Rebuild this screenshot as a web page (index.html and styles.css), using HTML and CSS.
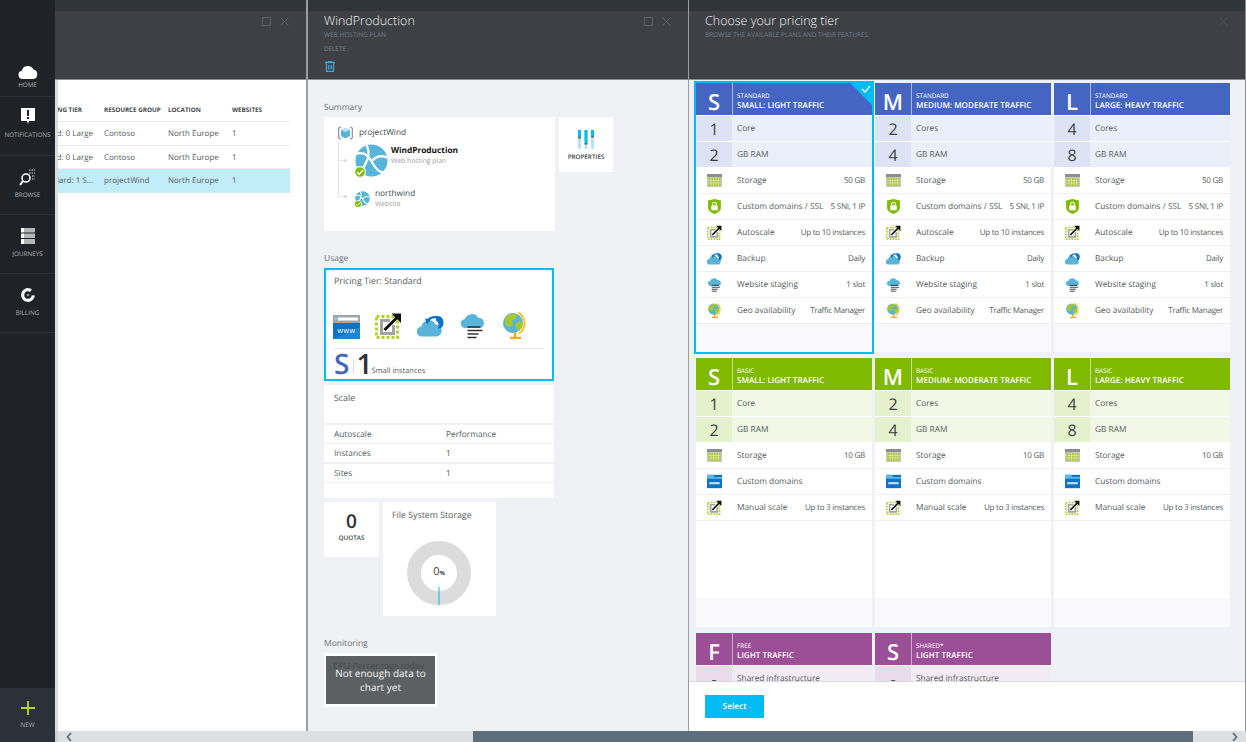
FILE: index.html
```html
<!DOCTYPE html>
<html lang="en">
<head>
<meta charset="utf-8">
<title>Choose your pricing tier</title>
<link rel="stylesheet" href="styles.css">
</head>
<body>
<svg class="defs" aria-hidden="true">
  <symbol id="i-cloud" viewBox="0 0 20 14"><path fill="currentColor" d="M4.5 14a4.2 4.2 0 0 1-.7-8.3A6.2 6.2 0 0 1 15.4 4.6 4.8 4.8 0 0 1 15.5 14z"/></symbol>
  <symbol id="i-www" viewBox="0 0 27 24"><rect width="27" height="24" fill="#0f72c4"/><rect width="27" height="8" fill="#9aa5ae"/><rect x="5" y="2.5" width="20" height="3" fill="#fff"/><circle cx="3" cy="4" r="1.4" fill="#7fd0f2"/><path d="M0 24 27 12v12z" fill="#1b86d6"/><text x="13.5" y="18" class="www-text">www</text></symbol>
  <symbol id="i-domain" viewBox="0 0 27 24"><rect width="27" height="24" fill="#0f72c4"/><path d="M0 0h11l2 4h14v3H0z" fill="#5ab8e6"/><rect x="4" y="13" width="19" height="4" fill="#bfe0f5"/></symbol>
  <symbol id="i-auto" viewBox="0 0 27 27"><rect x="1.5" y="4.5" width="21" height="21" fill="none" stroke="#b4cf2c" stroke-width="3" stroke-dasharray="3 2"/><path d="M15 8.500H6.500V21.500H18.500V13" fill="none" stroke="#a3a3a3" stroke-width="3"/><path d="M9.500 18 24 3.500" stroke="#111" stroke-width="3"/><path d="M16.500 1.500H26V11z" fill="#111"/></symbol>
  <symbol id="i-backup" viewBox="0 0 27 22"><path fill="#59b4d9" d="M5 22a5 5 0 0 1-.6-10A7.500 7.500 0 0 1 18.500 10a6 6 0 0 1 .5 12z"/><path fill="none" stroke="#fff" stroke-width="4.500" d="M10 6C14 1 21 1 24 5"/><path fill="#0f72c4" d="M19 2c4-2 8 2 7.500 7C26 13 24 14 21 14c1-3 1-6-2-8z"/><path fill="none" stroke="#0f72c4" stroke-width="2.400" d="M10 6.500C13 3 17 2 21 3"/><path fill="#0f72c4" d="M8 4l6 1-4 5z"/></symbol>
  <symbol id="i-staging" viewBox="0 0 24 27"><path fill="#59b4d9" d="M5 16a4.500 4.500 0 0 1-.6-9A7.500 7.500 0 0 1 18 6a5 5 0 0 1 1 10z"/><path stroke="#333" stroke-width="1.600" d="M7 15h13M7 18.500h15M7 22h11M7 25.500h9"/></symbol>
  <symbol id="i-geo" viewBox="0 0 25 27"><path d="M16 .5C24 5 25 16 17 21.500" fill="none" stroke="#fcc419" stroke-width="2"/><path d="M8 26h11M13 20v6" stroke="#f7a81b" stroke-width="2.500"/><circle cx="11" cy="11" r="10" fill="#59b4d9"/><path fill="#a5c832" d="M3 6c3-4 8-5 12-4l-1 5-4 1 1 5-4 2-4-3zM13 12l5-3 3 3-2 5-4 1z"/></symbol>
  <symbol id="i-storage" viewBox="0 0 15 13"><rect width="15" height="13" fill="#c6c8ca"/><rect width="15" height="3" fill="#8c8f92"/><rect x="1.500" y="4" width="12" height="8" fill="#a9c52f"/><path d="M1.500 6.500h12M1.500 9h12M4 4v8M6.500 4v8M9 4v8M11.500 4v8" stroke="#e6eacb" stroke-width=".7"/></symbol>
  <symbol id="i-shield" viewBox="0 0 12 14"><path fill="#7fba00" d="M0 1.500 6 0l6 1.500V8c0 3-3 5-6 6-3-1-6-3-6-6z"/><rect x="3" y="6" width="6" height="4.500" fill="#fff"/><path d="M4.300 6V4.700a1.700 1.700 0 0 1 3.400 0V6" fill="none" stroke="#fff"/></symbol>
  <symbol id="i-web" viewBox="0 0 34 34"><circle cx="17" cy="17" r="16.500" fill="#59b4d9"/><path d="M1 10c8-2 12 1 16 8s9 12 13 11M12 1c3 7 3 12-1 19S7 29 9 33M33 14c-7-3-12-1-16 4" fill="none" stroke="#fff" stroke-width="2.400"/></symbol>
  <symbol id="i-check" viewBox="0 0 12 12"><circle cx="6" cy="6" r="5.400" fill="#7fba00" stroke="#fff" stroke-width="1.200"/><path d="M3 6.200 5.200 8.300 9 4" fill="none" stroke="#fff" stroke-width="1.500"/></symbol>
</svg>

<div class="app">
  <nav class="nav">
    <a class="nav-item nav-item--first">
      <svg class="nav-icon nav-icon--cloud"><use href="#i-cloud"/></svg>
      <span>HOME</span>
    </a>
    <a class="nav-item nav-item--tight">
      <svg class="nav-icon" viewBox="0 0 20 20"><path fill="#fff" d="M3 2h14v13h-6l-1 3-1-3H3z"/><path stroke="#1f2327" stroke-width="2" d="M10 4v6M10 11v2"/></svg>
      <span>NOTIFICATIONS</span>
    </a>
    <a class="nav-item">
      <svg class="nav-icon" viewBox="0 0 20 20"><circle cx="8" cy="11" r="4" fill="none" stroke="#fff" stroke-width="1.600"/><path stroke="#fff" stroke-width="2" d="M5 14 2 18"/><path stroke="#9ca1a6" stroke-width="1.500" stroke-dasharray="1.500 1" d="M11 3h6M11 6h6M14 9h3M14 12h3"/></svg>
      <span>BROWSE</span>
    </a>
    <a class="nav-item">
      <svg class="nav-icon" viewBox="0 0 20 20"><path fill="#b4b7ba" d="M3 2h14v16H3z"/><path fill="#fff" d="M3 2h3v16H3z"/><path stroke="#1f2327" d="M3 7h14M3 12.500h14"/></svg>
      <span>JOURNEYS</span>
    </a>
    <a class="nav-item">
      <svg class="nav-icon" viewBox="0 0 20 20"><circle cx="10" cy="10" r="5.300" fill="none" stroke="#fff" stroke-width="3.200" stroke-dasharray="27 6.300" transform="rotate(5 10 10)"/><circle cx="10" cy="10" r="1.300" fill="#8d9297"/></svg>
      <span>BILLING</span>
    </a>
    <a class="nav-new">
      <svg class="new-icon" viewBox="0 0 14 14"><path stroke="#b8d432" stroke-width="1.800" d="M7 0v14M0 7h14"/></svg>
      <span>NEW</span>
    </a>
  </nav>

  <div class="workspace">
    <div class="blades">
      <section class="blade blade--list">
        <header class="blade-head">
          <div class="head-text"></div>
          <div class="win-controls">
            <svg class="win-icon" viewBox="0 0 9 9"><rect x=".5" y=".5" width="8" height="8" fill="none" stroke="currentColor"/></svg>
            <svg class="win-icon" viewBox="0 0 9 9"><path d="M.5.500l8 8M8.500.500l-8 8" stroke="currentColor"/></svg>
          </div>
        </header>
        <div class="list-body">
          <div class="table">
            <div class="t-row t-row--head"><div class="t-tier"><span>PRICING TIER</span></div><div>RESOURCE GROUP</div><div>LOCATION</div><div>WEBSITES</div></div>
            <div class="t-row"><div class="t-tier"><span>Shared: 0 Large</span></div><div>Contoso</div><div>North Europe</div><div>1</div></div>
            <div class="t-row"><div class="t-tier"><span>Shared: 0 Large</span></div><div>Contoso</div><div>North Europe</div><div>1</div></div>
            <div class="t-row t-row--selected"><div class="t-tier"><span>Standard: 1 S...</span></div><div>projectWind</div><div>North Europe</div><div>1</div></div>
          </div>
        </div>
      </section>

      <section class="blade blade--plan">
        <header class="blade-head">
          <div class="head-text">
            <h1>WindProduction</h1>
            <p class="head-sub">WEB HOSTING PLAN</p>
            <p class="head-cmd">DELETE</p>
            <svg class="trash" viewBox="0 0 10 11"><path fill="none" stroke="#46a3d3" stroke-width="1.300" d="M1.500 2.500V10.400H8.500V2.500M0 1.500H10M3.500 1.500V.5H6.500V1.500M3.800 4V8.500M6.200 4V8.500"/></svg>
          </div>
          <div class="win-controls">
            <svg class="win-icon" viewBox="0 0 9 9"><rect x=".5" y=".5" width="8" height="8" fill="none" stroke="currentColor"/></svg>
            <svg class="win-icon" viewBox="0 0 9 9"><path d="M.5.500l8 8M8.500.500l-8 8" stroke="currentColor"/></svg>
          </div>
        </header>
        <div class="plan-body">
          <h2 class="section-label">Summary</h2>
          <div class="tile-row tile-row--summary">
            <div class="summary">
              <div class="res-group">
                <svg class="cube" viewBox="0 0 15 14"><path fill="none" stroke="#8a8f94" stroke-width="1.200" d="M3 .7 .7 2v10L3 13.300M12 .7 14.300 2v10L12 13.300"/><path fill="#59b4d9" d="M7.500 2 12 4v6l-4.500 2.500L3 10V4z"/><path fill="#bfe3f2" d="M7.500 2 12 4 7.500 6 3 4z"/></svg>
                <span>projectWind</span>
              </div>
              <div class="tree">
                <div class="node node--large">
                  <i class="branch"></i>
                  <div class="res-icon res-icon--large">
                    <svg class="fill"><use href="#i-web"/></svg>
                    <svg class="badge badge--large"><use href="#i-check"/></svg>
                  </div>
                  <div class="node-text node-text--large"><b>WindProduction</b><small>Web hosting plan</small></div>
                </div>
                <div class="node node--small">
                  <i class="branch"></i>
                  <div class="res-icon res-icon--small">
                    <svg class="fill"><use href="#i-web"/></svg>
                    <svg class="badge badge--small"><use href="#i-check"/></svg>
                  </div>
                  <div class="node-text"><span>northwind</span><small>Website</small></div>
                </div>
              </div>
            </div>
            <div class="tile tile--props">
              <svg class="props-icon" viewBox="0 0 16 19"><path fill="#b5e4f7" d="M0 0h3v19H0zM6.500 0h3v19h-3zM13 0h3v19h-3z"/><path fill="#00bcf2" d="M0 0h3v8H0zM6.500 0h3v13h-3zM13 0h3v7h-3z"/><path fill="#666" d="M0 7h3v1.500H0zM6.500 13h3v1.500h-3zM13 6h3v1.500h-3z"/></svg>
              <span class="tile-cap">PROPERTIES</span>
            </div>
          </div>

          <h2 class="section-label section-label--gap">Usage</h2>
          <div class="pricing">
            <h3>Pricing Tier: Standard</h3>
            <div class="pricing-icons">
              <svg class="p-icon p-icon--www"><use href="#i-www"/></svg>
              <svg class="p-icon"><use href="#i-auto"/></svg>
              <svg class="p-icon"><use href="#i-backup"/></svg>
              <svg class="p-icon"><use href="#i-staging"/></svg>
              <svg class="p-icon"><use href="#i-geo"/></svg>
            </div>
            <div class="pricing-foot">
              <span class="p-tier">S</span><i class="p-sep"></i><span class="p-count">1</span><span class="p-desc">Small instances</span>
            </div>
          </div>
          <div class="scale-head"><h3>Scale</h3></div>
          <div class="scale-row"><span>Autoscale</span><span>Performance</span></div>
          <div class="scale-row"><span>Instances</span><span>1</span></div>
          <div class="scale-row scale-row--gap"><span>Sites</span><span>1</span></div>
          <div class="scale-row scale-row--end"></div>

          <div class="tile-row tile-row--stats">
            <div class="tile tile--quota"><span class="quota-num">0</span><span class="tile-cap">QUOTAS</span></div>
            <div class="storage">
              <h3>File System Storage</h3>
              <div class="donut-wrap">
                <svg class="donut" viewBox="0 0 64 64"><circle cx="32" cy="32" r="25" fill="none" stroke="#dcdcdc" stroke-width="14"/><path d="M32 46v18" stroke="#00bcf2"/></svg>
                <span class="donut-label">0<small>%</small></span>
              </div>
            </div>
          </div>

          <h2 class="section-label section-label--gap">Monitoring</h2>
          <div class="chart-tile">
            <div class="chart">
              <span class="chart-title">CPU Percentage today</span>
              <div class="chart-msg">Not enough data to chart yet</div>
            </div>
          </div>
        </div>
      </section>

      <section class="blade blade--tiers">
        <header class="blade-head">
          <div class="head-text">
            <h1>Choose your pricing tier</h1>
            <p class="head-sub">BROWSE THE AVAILABLE PLANS AND THEIR FEATURES</p>
          </div>
          <div class="win-controls">
            <svg class="win-icon win-icon--dim" viewBox="0 0 9 9"><path d="M.5.500l8 8M8.500.500l-8 8" stroke="currentColor"/></svg>
          </div>
        </header>
        <div class="tiers-body">
          <div class="tier-grid">
            <article class="card card--std card--selected">
              <div class="card-head"><span class="card-letter">S</span><div class="card-title"><small>STANDARD</small><b>SMALL: LIGHT TRAFFIC</b></div><svg class="card-check" viewBox="0 0 22 22"><path d="M0 0h22v22z" fill="#00bcf2"/><path d="M12 6 15 9 20 3" fill="none" stroke="#fff" stroke-width="1.200"/></svg></div>
              <div class="row row--spec"><span class="spec-num">1</span><span>Core</span></div>
              <div class="row row--spec"><span class="spec-num">2</span><span>GB RAM</span></div>
              <div class="row"><svg class="ico"><use href="#i-storage"/></svg><span>Storage</span><em>50 GB</em></div>
              <div class="row"><svg class="ico"><use href="#i-shield"/></svg><span>Custom domains / SSL</span><em>5 SNI, 1 IP</em></div>
              <div class="row"><svg class="ico"><use href="#i-auto"/></svg><span>Autoscale</span><em>Up to 10 instances</em></div>
              <div class="row"><svg class="ico"><use href="#i-backup"/></svg><span>Backup</span><em>Daily</em></div>
              <div class="row"><svg class="ico"><use href="#i-staging"/></svg><span>Website staging</span><em>1 slot</em></div>
              <div class="row"><svg class="ico"><use href="#i-geo"/></svg><span>Geo availability</span><em>Traffic Manager</em></div>
              <div class="card-space"></div><div class="card-foot"></div>
            </article>
            <article class="card card--std">
              <div class="card-head"><span class="card-letter">M</span><div class="card-title"><small>STANDARD</small><b>MEDIUM: MODERATE TRAFFIC</b></div></div>
              <div class="row row--spec"><span class="spec-num">2</span><span>Cores</span></div>
              <div class="row row--spec"><span class="spec-num">4</span><span>GB RAM</span></div>
              <div class="row"><svg class="ico"><use href="#i-storage"/></svg><span>Storage</span><em>50 GB</em></div>
              <div class="row"><svg class="ico"><use href="#i-shield"/></svg><span>Custom domains / SSL</span><em>5 SNI, 1 IP</em></div>
              <div class="row"><svg class="ico"><use href="#i-auto"/></svg><span>Autoscale</span><em>Up to 10 instances</em></div>
              <div class="row"><svg class="ico"><use href="#i-backup"/></svg><span>Backup</span><em>Daily</em></div>
              <div class="row"><svg class="ico"><use href="#i-staging"/></svg><span>Website staging</span><em>1 slot</em></div>
              <div class="row"><svg class="ico"><use href="#i-geo"/></svg><span>Geo availability</span><em>Traffic Manager</em></div>
              <div class="card-space"></div><div class="card-foot"></div>
            </article>
            <article class="card card--std">
              <div class="card-head"><span class="card-letter">L</span><div class="card-title"><small>STANDARD</small><b>LARGE: HEAVY TRAFFIC</b></div></div>
              <div class="row row--spec"><span class="spec-num">4</span><span>Cores</span></div>
              <div class="row row--spec"><span class="spec-num">8</span><span>GB RAM</span></div>
              <div class="row"><svg class="ico"><use href="#i-storage"/></svg><span>Storage</span><em>50 GB</em></div>
              <div class="row"><svg class="ico"><use href="#i-shield"/></svg><span>Custom domains / SSL</span><em>5 SNI, 1 IP</em></div>
              <div class="row"><svg class="ico"><use href="#i-auto"/></svg><span>Autoscale</span><em>Up to 10 instances</em></div>
              <div class="row"><svg class="ico"><use href="#i-backup"/></svg><span>Backup</span><em>Daily</em></div>
              <div class="row"><svg class="ico"><use href="#i-staging"/></svg><span>Website staging</span><em>1 slot</em></div>
              <div class="row"><svg class="ico"><use href="#i-geo"/></svg><span>Geo availability</span><em>Traffic Manager</em></div>
              <div class="card-space"></div><div class="card-foot"></div>
            </article>

            <article class="card card--basic">
              <div class="card-head"><span class="card-letter">S</span><div class="card-title"><small>BASIC</small><b>SMALL: LIGHT TRAFFIC</b></div></div>
              <div class="row row--spec"><span class="spec-num">1</span><span>Core</span></div>
              <div class="row row--spec"><span class="spec-num">2</span><span>GB RAM</span></div>
              <div class="row"><svg class="ico"><use href="#i-storage"/></svg><span>Storage</span><em>10 GB</em></div>
              <div class="row"><svg class="ico"><use href="#i-domain"/></svg><span>Custom domains</span></div>
              <div class="row"><svg class="ico"><use href="#i-auto"/></svg><span>Manual scale</span><em>Up to 3 instances</em></div>
              <div class="card-space"></div><div class="card-foot"></div>
            </article>
            <article class="card card--basic">
              <div class="card-head"><span class="card-letter">M</span><div class="card-title"><small>BASIC</small><b>MEDIUM: MODERATE TRAFFIC</b></div></div>
              <div class="row row--spec"><span class="spec-num">2</span><span>Cores</span></div>
              <div class="row row--spec"><span class="spec-num">4</span><span>GB RAM</span></div>
              <div class="row"><svg class="ico"><use href="#i-storage"/></svg><span>Storage</span><em>10 GB</em></div>
              <div class="row"><svg class="ico"><use href="#i-domain"/></svg><span>Custom domains</span></div>
              <div class="row"><svg class="ico"><use href="#i-auto"/></svg><span>Manual scale</span><em>Up to 3 instances</em></div>
              <div class="card-space"></div><div class="card-foot"></div>
            </article>
            <article class="card card--basic">
              <div class="card-head"><span class="card-letter">L</span><div class="card-title"><small>BASIC</small><b>LARGE: HEAVY TRAFFIC</b></div></div>
              <div class="row row--spec"><span class="spec-num">4</span><span>Cores</span></div>
              <div class="row row--spec"><span class="spec-num">8</span><span>GB RAM</span></div>
              <div class="row"><svg class="ico"><use href="#i-storage"/></svg><span>Storage</span><em>10 GB</em></div>
              <div class="row"><svg class="ico"><use href="#i-domain"/></svg><span>Custom domains</span></div>
              <div class="row"><svg class="ico"><use href="#i-auto"/></svg><span>Manual scale</span><em>Up to 3 instances</em></div>
              <div class="card-space"></div><div class="card-foot"></div>
            </article>

            <article class="card card--free">
              <div class="card-head"><span class="card-letter">F</span><div class="card-title"><small>FREE</small><b>LIGHT TRAFFIC</b></div></div>
              <div class="row row--spec"><span class="spec-num">-</span><span>Shared infrastructure</span></div>
            </article>
            <article class="card card--free">
              <div class="card-head"><span class="card-letter">S</span><div class="card-title"><small>SHARED*</small><b>LIGHT TRAFFIC</b></div></div>
              <div class="row row--spec"><span class="spec-num">-</span><span>Shared infrastructure</span></div>
            </article>
          </div>
        </div>
        <footer class="tiers-foot"><button class="select-btn">Select</button></footer>
      </section>
    </div>
    <div class="scrollbar">
      <div class="sb-track"><svg class="sb-arrow" viewBox="0 0 6 10"><path d="M5 1 1.500 5 5 9" fill="none" stroke="#5f6e7c" stroke-width="1.800"/></svg></div>
      <div class="sb-thumb"></div>
      <div class="sb-track sb-track--end"><svg class="sb-arrow" viewBox="0 0 6 10"><path d="M1 1 4.500 5 1 9" fill="none" stroke="#5f6e7c" stroke-width="1.800"/></svg></div>
    </div>
  </div>
</div>
</body>
</html>
```

FILE: styles.css
```css
* { box-sizing: border-box; }
html, body { margin: 0; height: 100%; overflow: hidden; }
body { font-family: "Open Sans", "Noto Sans", "Liberation Sans", sans-serif; color: #555b60; background: #fff; text-rendering: geometricPrecision; }
h1, h2, h3, p { margin: 0; font-weight: 400; }
.defs { width: 0; height: 0; display: block; overflow: hidden; }
.www-text { font: 7.500px "Liberation Sans", sans-serif; fill: #fff; text-anchor: middle; letter-spacing: .6px; }

.app { display: flex; width: 1246px; height: 742px; }

/* left navigation */
.nav { width: 55px; flex: none; background: #1f2327; display: flex; flex-direction: column; padding-top: 60px; color: #a9adb1; }
.nav-item { height: 59px; padding-top: 11px; display: flex; flex-direction: column; align-items: center; gap: 3px; border-bottom: 1px solid #2a2f34; font-size: 6.300px; line-height: 10px; white-space: nowrap; }
.nav-item--first { height: 37px; padding-top: 5px; gap: 1px; }
.nav-item--tight { height: 59px; padding-top: 9px; gap: 4px; }
.nav-icon { width: 20px; height: 20px; flex: none; color: #fff; }
.nav-icon--cloud { height: 14px; }
.nav-new { margin-top: auto; height: 54px; background: #2c3038; display: flex; flex-direction: column; align-items: center; padding-top: 13px; gap: 5px; font-size: 6.300px; line-height: 10px; color: #a9adb1; }
.new-icon { width: 14px; height: 14px; }

.workspace { flex: 1; min-width: 0; display: flex; flex-direction: column; }
.blades { flex: 1; min-height: 0; display: flex; }
.blade { display: flex; flex-direction: column; min-height: 0; }
.blade--list { width: 253px; border-right: 2px solid #9a9ea2; background: #fff; }
.blade--plan { width: 381px; border-right: 1px solid #9a9ea2; background: #f0f1f4; }
.blade--tiers { flex: 1; min-width: 0; border-right: 1px solid #8b8f93; background: #f0f1f7; }

/* blade header */
.blade-head { height: 80px; flex: none; background: linear-gradient(#2e353b 11px, #3e4045 11px); border-bottom: 1px solid #8c8f92; padding: 11px 17px 0 16px; display: flex; justify-content: space-between; color: #fff; }
.head-text h1 { font-size: 12.500px; line-height: 20px; font-weight: 300; color: #f0f0f0; }
.head-sub { font-size: 6.500px; line-height: 8px; color: #6f7b88; white-space: nowrap; }
.head-cmd { font-size: 6.300px; line-height: 8px; margin-top: 6px; color: #7d8084; }
.trash { display: block; width: 10px; height: 11px; margin: 8px 0 0 1px; }
.win-controls { display: flex; gap: 9px; margin-top: 6px; color: #5c5f63; }
.win-icon { width: 9px; height: 9px; }
.win-icon--dim { color: #4d5054; }

/* first blade */
.list-body { flex: 1; border-left: 3px solid #dcdcdc; padding-top: 18px; min-height: 0; }
.table { width: 232px; font-size: 8px; }
.t-row { display: grid; grid-template-columns: 46px 64px 64px 58px; height: 23.500px; padding-top: 1px; align-items: center; border-bottom: 1px solid #ececec; white-space: nowrap; }
.t-row--head { height: 24px; padding-top: 0; font-size: 6.300px; font-weight: 700; color: #44494e; }
.t-row--selected { background: #c3ecf9; border-bottom-color: #c3ecf9; }
.t-tier { overflow: hidden; display: flex; justify-content: flex-end; padding-right: 11px; }
.t-tier span { flex: none; }
.t-row--head .t-tier { padding-right: 22px; }

/* second blade */
.plan-body { flex: 1; padding: 21px 0 0 16px; min-height: 0; overflow: hidden; }
.section-label { font-size: 8.500px; line-height: 14px; color: #6b7075; }
.section-label--gap { margin-top: 21px; }
.tile-row { display: flex; gap: 4px; margin-top: 2px; align-items: flex-start; }
.tile { background: #fff; display: flex; flex-direction: column; align-items: center; }
.tile-cap { font-size: 6.300px; line-height: 9px; font-weight: 600; color: #44494e; }
.summary { width: 231px; height: 114px; background: #fff; padding: 9px 0 0 14px; }
.res-group { display: flex; align-items: center; gap: 6px; font-size: 8.300px; line-height: 14px; color: #44494e; }
.cube { width: 15px; height: 14px; }
.tree { margin-top: 3px; background: linear-gradient(#e4e6ea, #e4e6ea) 0 0 / 1px 54px no-repeat; }
.node { display: flex; align-items: center; }
.node--small { margin-top: 13px; }
.node--large { height: 34px; }
.node--small { height: 16px; }
.branch { width: 8px; height: 1px; background: #e4e6ea; flex: none; margin-right: 9px; position: relative; }
.branch::after { content: ""; position: absolute; right: -1px; top: -1px; width: 3px; height: 3px; border-radius: 50%; background: #d5d8dc; }
.node--small .branch { margin-top: -3px; }
.res-icon { position: relative; flex: none; }
.res-icon--large { width: 33px; height: 33px; margin-right: 3px; }
.res-icon--small { width: 15px; height: 15px; margin-right: 5px; }
.fill { width: 100%; height: 100%; display: block; }
.badge { position: absolute; }
.badge--large { width: 12px; height: 12px; left: -1px; bottom: -1px; }
.badge--small { width: 8px; height: 8px; left: -1px; bottom: -2px; }
.node-text { display: flex; flex-direction: column; font-size: 8.300px; line-height: 10px; color: #44494e; white-space: nowrap; padding-top: 2px; }
.node-text--large { align-self: flex-start; padding-top: 3px; }
.node-text b { font-weight: 700; color: #111; }
.node-text small { font-size: 6.800px; color: #9ba0a5; }
.tile--props { width: 54px; height: 55px; padding-top: 13px; gap: 3px; }
.props-icon { width: 16px; height: 19px; }

.pricing { width: 230px; height: 113px; margin-top: 2px; background: #fff; border: 2px solid #00bcf2; padding: 0 8px; }
.pricing h3, .scale-head h3, .storage h3 { font-size: 8.800px; line-height: 12px; color: #555b60; }
.pricing h3 { margin-top: 5px; }
.pricing-icons { display: flex; gap: 15px; margin-top: 25px; padding-bottom: 9px; border-bottom: 1px solid #e8e8e8; height: 37px; margin-left: -1px; }
.p-icon { width: 27px; height: 27px; flex: none; }
.p-icon--www { height: 24px; margin-top: 3px; }
.pricing-foot { display: flex; align-items: flex-end; height: 30px; }
.p-tier { font-size: 28px; line-height: 30px; color: #4465c2; margin-top: 1px; font-weight: 600; }
.p-sep { width: 1px; height: 14px; background: #ddd; margin: 0 4px 5px 4px; }
.p-count { font-size: 28px; line-height: 30px; color: #2b3036; margin-left: -2px; font-weight: 600; }
.p-desc { font-size: 7.500px; line-height: 11px; margin: 0 0 2px -1px; }

.scale-head { width: 230px; height: 38px; margin-top: 4px; background: #fff; padding: 7px 10px 0; }
.scale-row { width: 230px; height: 18px; margin-top: 1px; background: #fff; display: grid; grid-template-columns: 112px 1fr; padding-left: 10px; font-size: 8.300px; line-height: 20px; }
.scale-head + .scale-row { margin-top: 2px; }
.scale-row--gap { margin-top: 2px; }
.scale-row--end { height: 15px; }
.tile-row--stats { margin-top: 4px; }
.tile--quota { width: 55px; height: 55px; padding-top: 8px; gap: 0; }
.quota-num { font-size: 19px; line-height: 23px; color: #2b3036; font-weight: 600; }
.storage { width: 113px; height: 114px; background: #fff; padding: 7px 9px 0; }
.donut-wrap { position: relative; width: 64px; height: 64px; margin: 20px 0 0 15px; }
.donut { width: 64px; height: 64px; display: block; }
.donut-label { position: absolute; left: 0; right: 0; top: 24px; text-align: center; font-size: 11px; line-height: 14px; color: #3a3f44; }
.donut-label small { font-size: 6px; font-weight: 700; }
.chart-tile { width: 113px; height: 54px; margin-top: 2px; background: #fff; padding: 3px 2px 3px; }
.chart { position: relative; height: 48px; background: #5c6063; padding: 4px 7px; font-size: 8.800px; line-height: 12px; overflow: hidden; }
.chart-title { color: #44484b; white-space: nowrap; }
.chart-msg { position: absolute; inset: 0; padding-top: 10px; text-align: center; color: #f2f2f2; font-size: 10px; line-height: 14px; }

/* third blade */
.tiers-body { flex: 1; min-height: 0; overflow: hidden; padding: 3px 0 0 7px; }
.tier-grid { display: grid; grid-template-columns: repeat(3, 176px); column-gap: 3px; row-gap: 6px; grid-auto-rows: 269px; }
.card { display: flex; flex-direction: column; background: #fff; position: relative; min-height: 0; }
.card--selected { outline: 2px solid #00bcf2; }
.card-head { height: 33px; flex: none; display: flex; border-bottom: 1px solid #fff; color: #fff; position: relative; }
.card-letter { width: 37px; flex: none; text-align: center; font-size: 22px; font-weight: 600; line-height: 38px; height: 32px; overflow: hidden; border-right: 1px solid rgba(255,255,255,.55); }
.card-title { padding: 7px 0 0 4px; display: flex; flex-direction: column; white-space: nowrap; }
.card-title small { font-size: 6.300px; line-height: 11px; }
.card-title b { font-size: 8.100px; line-height: 10px; font-weight: 600; }
.card-check { position: absolute; top: 0; right: 0; width: 22px; height: 22px; }
.card--std .card-head { background: #4465c2; }
.card--basic .card-head { background: #7fba00; }
.card--free .card-head { background: #9b4f96; }
.row { height: 26px; flex: none; display: flex; align-items: center; padding: 0 7px 0 41px; font-size: 8.300px; color: #555b60; border-bottom: 1px solid #eeeff2; position: relative; white-space: nowrap; }
.row em { font-style: normal; margin-left: auto; font-size: 8px; letter-spacing: -.25px; }
.ico { position: absolute; left: 11px; top: 5px; width: 15px; height: 15px; }
.row--spec { border-bottom: 1px solid #fff; }
.spec-num { position: absolute; left: 0; top: 0; bottom: 0; width: 36px; display: flex; align-items: center; justify-content: center; font-size: 16px; color: #3a3f44; }
.card--std .row--spec { background: #ebeffa; }
.card--std .spec-num { background: #dde3f5; }
.card--basic .row--spec { background: #f2f8e5; }
.card--basic .spec-num { background: #e5f1cc; }
.card--free .row--spec { background: #f3ebf3; }
.card--free .spec-num { background: #e9dbe9; }
.card-space { flex: 1 0 0; background: #fff; }
.card-foot { flex: 0 1 29px; min-height: 0; background: #f9f9fb; }
.tiers-foot { height: 50px; flex: none; background: #fff; border-top: 1px solid #d9dbe0; padding: 13px 16px 0; }
.select-btn { display: block; width: 59px; height: 23px; border: 0; padding: 0; background: #00bcf2; color: #fff; font: 600 8.300px "Open Sans", sans-serif; text-rendering: geometricPrecision; }

/* scrollbar */
.scrollbar { height: 11px; flex: none; display: grid; grid-template-columns: 415px 720px 1fr; background: #dde0e3; border-left: 3px solid #d0d3d6; }
.sb-track { display: flex; align-items: center; padding: 0 8px; }
.sb-track--end { justify-content: flex-end; }
.sb-thumb { background: #5f6e7c; }
.sb-arrow { width: 6px; height: 10px; }
```
